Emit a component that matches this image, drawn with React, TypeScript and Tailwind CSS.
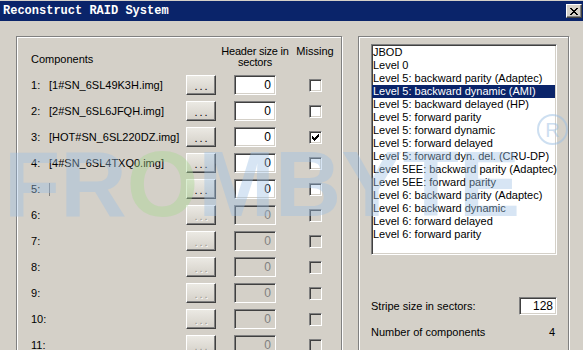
import React from 'react';

const raid = [
  'JBOD',
  'Level 0',
  'Level 5: backward parity (Adaptec)',
  'Level 5: backward dynamic (AMI)',
  'Level 5: backward delayed (HP)',
  'Level 5: forward parity',
  'Level 5: forward dynamic',
  'Level 5: forward delayed',
  'Level 5: forward dyn. del. (CRU-DP)',
  'Level 5EE: backward parity (Adaptec)',
  'Level 5EE: forward parity',
  'Level 6: backward parity (Adaptec)',
  'Level 6: backward dynamic',
  'Level 6: forward delayed',
  'Level 6: forward parity',
];

const rows = [
  { file: '[1#SN_6SL49K3H.img]', on: true },
  { file: '[2#SN_6SL6JFQH.img]', on: true },
  { file: '[HOT#SN_6SL220DZ.img]', on: true, checked: true },
  { file: '[4#SN_6SL4TXQ0.img]', on: true },
  { file: '', on: true, caret: true },
  { file: '', on: false },
  { file: '', on: false },
  { file: '', on: false },
  { file: '', on: false },
  { file: '', on: false },
  { file: '', on: false },
];

const sunken =
  'border border-t-[#808080] border-l-[#808080] border-r-white border-b-white shadow-[inset_1px_1px_0_#404040,inset_-1px_-1px_0_#d4d0c8]';

function DotsButton({ on }: { on: boolean }) {
  return (
    <div className="w-[30px] h-[20px] bg-linear-to-b from-[#ebe9e3] to-[#d4d0c8] border border-t-white border-l-white border-r-[#404040] border-b-[#404040] shadow-[inset_-1px_-1px_0_#808080] flex items-end justify-center pb-[4px]">
      <span
        className={
          on
            ? 'text-[11px] leading-[8px] tracking-[2px] pl-[2px] text-black'
            : 'text-[11px] leading-[8px] tracking-[2px] pl-[2px] text-[#9a9890] [text-shadow:1px_1px_0_#fff]'
        }
      >
        ...
      </span>
    </div>
  );
}

function CheckBox({ on, checked }: { on: boolean; checked?: boolean }) {
  return (
    <div className={`w-[13px] h-[13px] ${sunken} ${on ? 'bg-white' : 'bg-[#d4d0c8]'} flex items-center justify-center`}>
      {checked && (
        <svg width="7" height="7" viewBox="0 0 7 7" shapeRendering="crispEdges">
          <path d="M0 2h1v3h-1zM1 3h1v3h-1zM2 4h1v3h-1zM3 3h1v3h-1zM4 2h1v3h-1zM5 1h1v3h-1zM6 0h1v3h-1z" fill="#000" />
        </svg>
      )}
    </div>
  );
}

export default function App() {
  return (
    <div className="relative w-[583px] h-[350px] overflow-hidden bg-[#d4d0c8] font-['Liberation_Sans',Arial,sans-serif] text-[11px] text-black">
      <div className="border-t border-[#d4d0c8] h-[21px] bg-[#0a246a] flex items-center justify-between pl-[3px] pr-[1px]">
        <span className="font-['Liberation_Mono',monospace] font-bold text-[12px] text-white leading-none">Reconstruct RAID System</span>
        <div className="w-[16px] h-[14px] bg-[#d4d0c8] border border-t-white border-l-white border-r-[#404040] border-b-[#404040] shadow-[inset_-1px_-1px_0_#808080] flex items-center justify-center">
          <svg width="8" height="7" viewBox="0 0 8 7" shapeRendering="crispEdges">
            <path d="M0 0h2v1h-2zM6 0h2v1h-2zM1 1h2v1h-2zM5 1h2v1h-2zM2 2h4v1h-4zM3 3h2v1h-2zM2 4h4v1h-4zM1 5h2v1h-2zM5 5h2v1h-2zM0 6h2v1h-2zM6 6h2v1h-2z" fill="#000" />
          </svg>
        </div>
      </div>

      <div className="flex pl-[16px] pt-[15px]">
        <div className="w-[326px] h-[360px] border border-[#808080] shadow-[inset_1px_1px_0_#fff,1px_1px_0_#fff] pl-[14px] pt-[9px]">
          <div className="flex h-[26px] leading-[11px]">
            <div className="w-[155px] flex items-center">Components</div>
            <div className="w-[30px]" />
            <div className="w-[78px] text-center tracking-[-0.2px]">
              Header size in
              <br />
              sectors
            </div>
            <div className="w-[42px] text-center">Missing</div>
          </div>
          {rows.map((r, i) => (
            <div key={i} className="flex items-center h-[26px]">
              <div className="w-[18px]">{i + 1}:</div>
              <div className="w-[137px] whitespace-nowrap">
                {r.caret ? <div className="w-px h-[13px] bg-[#808080]" /> : r.file}
              </div>
              <DotsButton on={r.on && i < 5} />
              <div className="w-[18px]" />
              <div
                className={`w-[42px] h-[20px] ${sunken} ${r.on ? 'bg-white text-black' : 'bg-[#d4d0c8] text-[#808080]'} flex items-center justify-end pr-[4px] text-[12px]`}
              >
                0
              </div>
              <div className="w-[33px]" />
              <CheckBox on={r.on} checked={r.checked} />
            </div>
          ))}
        </div>

        <div className="ml-[16px] w-[211px] h-[360px] border border-[#808080] shadow-[inset_1px_1px_0_#fff,1px_1px_0_#fff] pl-[12px] pt-[7px]">
          <div className={`w-[186px] h-[211px] bg-white ${sunken} p-[1px] pl-0`}>
            {raid.map((t, i) => (
              <div
                key={t}
                className={`h-[13px] leading-[13px] pl-[1px] whitespace-nowrap ${i === 3 ? 'bg-[#0a246a] text-white' : ''}`}
              >
                {t}
              </div>
            ))}
          </div>
          <div className="w-[186px] mt-[41px] h-[20px] flex items-center justify-between">
            <span>Stripe size in sectors:</span>
            <div className={`w-[38px] h-[18px] bg-white ${sunken} flex items-center justify-end pr-[3px] text-[12px]`}>128</div>
          </div>
          <div className="w-[186px] mt-[6px] h-[20px] flex items-center justify-between pr-[2px]">
            <span>Number of components</span>
            <span>4</span>
          </div>
        </div>
      </div>

      {/* faint watermark over the dialog */}
      <div className="pointer-events-none absolute left-[4px] top-[138px] font-['Liberation_Sans',Arial,sans-serif] font-bold text-[92px] leading-[92px] text-[#9cc0e4] opacity-[0.4] whitespace-nowrap">
        FR<span className="text-[#a8d890]">O</span>MBYTE
      </div>
      <div className="pointer-events-none absolute left-[537px] top-[114px] w-[31px] h-[31px] rounded-full border-2 border-[#9cc0e4] opacity-[0.5] flex items-center justify-center font-['Liberation_Sans',Arial,sans-serif] text-[20px] text-[#9cc0e4]">
        R
      </div>
    </div>
  );
}
